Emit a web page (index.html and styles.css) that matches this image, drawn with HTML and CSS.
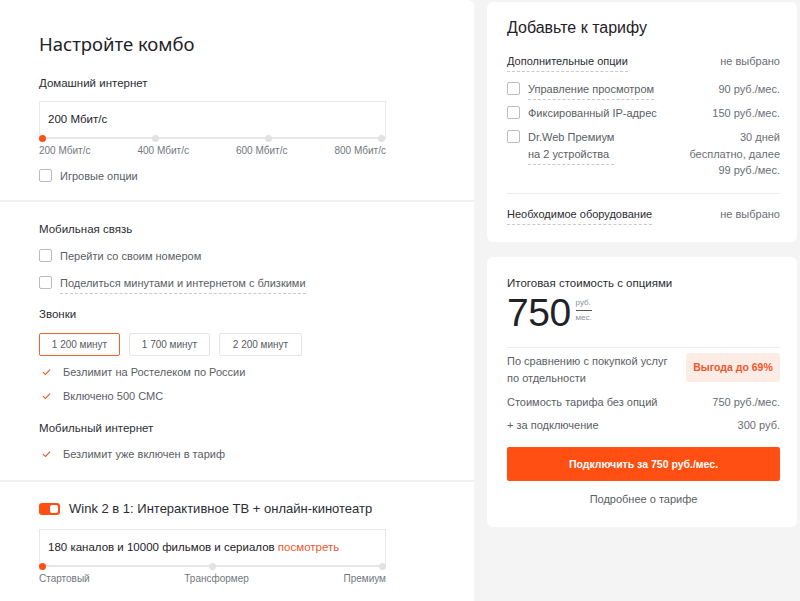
FILE: index.html
```html
<!DOCTYPE html>
<html lang="ru">
<head>
<meta charset="utf-8">
<title>Комбо</title>
<link rel="stylesheet" href="styles.css">
</head>
<body>
<div class="page">
  <main class="card left">
    <section class="sec sec-first">
      <h1 class="title">Настройте комбо</h1>
      <div class="label">Домашний интернет</div>
      <div class="slider">
        <div class="slider-box">200 Мбит/с</div>
        <div class="track four">
          <span class="dot on"></span><span class="dot"></span><span class="dot"></span><span class="dot"></span>
        </div>
        <div class="ticks">
          <span>200 Мбит/с</span><span>400 Мбит/с</span><span>600 Мбит/с</span><span>800 Мбит/с</span>
        </div>
      </div>
      <label class="check"><span class="box"></span><span>Игровые опции</span></label>
    </section>
    <section class="sec sec-mobile">
      <div class="label">Мобильная связь</div>
      <label class="check"><span class="box"></span><span>Перейти со своим номером</span></label>
      <label class="check"><span class="box"></span><span class="dotted">Поделиться минутами и интернетом с близкими</span></label>
      <div class="label sub">Звонки</div>
      <div class="pills">
        <span class="pill active">1 200 минут</span>
        <span class="pill">1 700 минут</span>
        <span class="pill">2 200 минут</span>
      </div>
      <ul class="ticklist">
        <li><svg class="tick" viewBox="0 0 10 8"><path d="M1 4.2 L3.8 6.6 L9 1.4" fill="none" stroke="#f05a28" stroke-width="1.3"/></svg>Безлимит на Ростелеком по России</li>
        <li><svg class="tick" viewBox="0 0 10 8"><path d="M1 4.2 L3.8 6.6 L9 1.4" fill="none" stroke="#f05a28" stroke-width="1.3"/></svg>Включено 500 СМС</li>
      </ul>
      <div class="label sub2">Мобильный интернет</div>
      <ul class="ticklist last">
        <li><svg class="tick" viewBox="0 0 10 8"><path d="M1 4.2 L3.8 6.6 L9 1.4" fill="none" stroke="#f05a28" stroke-width="1.3"/></svg>Безлимит уже включен в тариф</li>
      </ul>
    </section>
    <section class="sec sec-tv">
      <div class="toggle-row"><span class="toggle"><span class="knob"></span></span><span class="toggle-text">Wink 2 в 1: Интерактивное ТВ + онлайн-кинотеатр</span></div>
      <div class="slider">
        <div class="slider-box">180 каналов и 10000 фильмов и сериалов <a class="link">посмотреть</a></div>
        <div class="track three">
          <span class="dot on"></span><span class="dot"></span><span class="dot"></span>
        </div>
        <div class="ticks">
          <span>Стартовый</span><span>Трансформер</span><span>Премиум</span>
        </div>
      </div>
    </section>
  </main>
  <aside class="right">
    <div class="card addon">
      <h2 class="title2">Добавьте к тарифу</h2>
      <div class="row head"><span class="dotted">Дополнительные опции</span><span class="val">не выбрано</span></div>
      <div class="row opt first"><label class="check"><span class="box"></span><span class="dotted">Управление просмотром</span></label><span class="val">90 руб./мес.</span></div>
      <div class="row opt"><label class="check"><span class="box"></span><span>Фиксированный IP-адрес</span></label><span class="val">150 руб./мес.</span></div>
      <div class="row opt multi"><label class="check"><span class="box"></span><span class="dotted">Dr.Web Премиум<br>на 2 устройства</span></label><span class="val">30 дней<br>бесплатно, далее<br>99 руб./мес.</span></div>
      <div class="row head equip"><span class="dotted">Необходимое оборудование</span><span class="val">не выбрано</span></div>
    </div>
    <div class="card total">
      <div class="total-title">Итоговая стоимость с опциями</div>
      <div class="price"><span class="big">750</span><span class="frac"><span class="num">руб.</span><span class="den">мес.</span></span></div>
      <div class="cmp">
        <span class="cmp-text">По сравнению с покупкой услуг<br>по отдельности</span>
        <span class="badge">Выгода до 69%</span>
      </div>
      <div class="row line"><span>Стоимость тарифа без опций</span><span class="val">750 руб./мес.</span></div>
      <div class="row line"><span>+ за подключение</span><span class="val">300 руб.</span></div>
      <button class="btn">Подключить за 750 руб./мес.</button>
      <div class="more">Подробнее о тарифе</div>
    </div>
  </aside>
</div>
</body>
</html>
```

FILE: styles.css
```css
* { box-sizing: border-box; }
html, body { margin: 0; padding: 0; }
body {
  background: #f4f4f4;
  font-family: "Liberation Sans", Arial, sans-serif;
  color: #5a5e65;
  font-size: 11px;
  width: 800px;
  height: 601px;
  overflow: hidden;
}
.page {
  display: grid;
  grid-template-columns: 474px 310px;
  column-gap: 13px;
  align-items: start;
}
.card {
  background: #fff;
  border-radius: 6px;
}
.left {
  border-radius: 0 6px 0 0;
  min-height: 601px;
}
.sec {
  padding: 0 39px;
  border-bottom: 2px solid #f1f1f1;
}
.sec-first { padding-top: 31px; padding-bottom: 16px; }
.title {
  margin: 0;
  font-family: "Noto Sans", "Liberation Sans", sans-serif;
  font-size: 18.5px;
  font-weight: 400;
  color: #1f2228;
  line-height: 26px;
}
.label {
  color: #2a2d33;
  font-size: 11.5px;
  line-height: 16px;
  margin-top: 18px;
}
.slider { margin-top: 10px; width: 347px; }
.slider-box {
  border: 1px solid #e8e8e8;
  border-bottom: none;
  height: 36px;
  padding: 11px 8px 0;
  color: #1f2228;
  font-size: 11.5px;
}
.link { color: #f0552a; }
.track {
  height: 2px;
  background: #e6e6e6;
  display: flex;
  justify-content: space-between;
  align-items: center;
}
.track.four { padding: 0 1px 0 0; }
.dot {
  width: 7px; height: 7px;
  border-radius: 50%;
  background: #e2e2e2;
}
.dot.on { background: #ff4f12; }
.ticks {
  display: flex;
  justify-content: space-between;
  margin-top: 5px;
  font-size: 10px;
  color: #73777e;
  line-height: 14px;
}
.check {
  display: flex;
  align-items: flex-start;
  gap: 8px;
  line-height: 16px;
}
.box {
  width: 13px; height: 13px;
  border: 1px solid #b9bcc0;
  border-radius: 2px;
  flex: none;
  margin-top: 1px;
}
.sec-first .check { margin-top: 10px; }
.dotted {
  border-bottom: 1px dashed #c8cacd;
  padding-bottom: 2px;
}
.sec-mobile { padding-top: 19px; padding-bottom: 18px; }
.sec-mobile .label:first-child { margin-top: 0; }
.sec-mobile .check { margin-top: 11px; }
.label.sub { margin-top: 12px; }
.label.sub2 { margin-top: 16px; }
.pills { display: flex; gap: 9px; margin-top: 11px; }
.pill {
  width: 81px;
  height: 23px;
  border: 1px solid #e5e5e5;
  border-radius: 2px;
  display: flex; align-items: center; justify-content: center;
  font-size: 10px;
  color: #575b63;
}
.pill.active { border-color: #ee6433; }
.pill:last-child { width: 83px; }
.ticklist { list-style: none; margin: 0; padding: 0; }
.ticklist li {
  display: flex; align-items: center;
  margin-top: 8px;
  line-height: 16px;
}
.ticklist.last li { margin-top: 10px; }
.tick { width: 9px; height: 8px; margin: 0 12px 0 3px; }
.sec-tv { border-bottom: none; padding-top: 19px; }
.toggle-row { display: flex; align-items: center; gap: 9px; }
.toggle {
  width: 21px; height: 12px;
  border-radius: 3px;
  background: #ff4f12;
  position: relative;
}
.knob {
  position: absolute;
  right: 2px; top: 2px;
  width: 8px; height: 8px;
  border-radius: 2px;
  background: #fff;
}
.toggle-text { font-size: 13px; color: #2a2d33; }
.sec-tv .slider { margin-top: 13px; }

.right { display: flex; flex-direction: column; gap: 15px; padding-top: 2px; }
.addon { padding: 15px 17px 17px 20px; }
.title2 {
  margin: 0;
  font-size: 16px;
  font-weight: 400;
  color: #1f2228;
  line-height: 22px;
}
.row { display: flex; justify-content: space-between; align-items: flex-start; }
.val { text-align: right; color: #6a6e75; }
.row.head { margin-top: 14px; color: #2a2d33; line-height: 16px; }
.row.opt { margin-top: 5px; }
.row.opt.first { margin-top: 9px; }
.row.opt.multi { margin-top: 8px; }
.row.opt .val { line-height: 16px; }
.row.opt.multi .val, .row.opt.multi .check { line-height: 16.5px; }
.row.equip { border-top: 1px solid #ececec; margin-top: 14px; padding-top: 12px; }
.total { padding: 18px 17px 20px 20px; }
.total-title { color: #2a2d33; font-size: 11.5px; line-height: 16px; }
.price { display: flex; align-items: flex-start; gap: 5px; margin-top: 2px; padding-bottom: 14px; border-bottom: 1px solid #ececec; }
.big { font-size: 39px; line-height: 40px; color: #1f2228; letter-spacing: -0.5px; }
.frac { display: flex; flex-direction: column; font-size: 8px; color: #8a8e94; margin-top: 5px; }
.num { border-bottom: 1px solid #555; padding-bottom: 2px; line-height: 10px; }
.den { line-height: 10px; padding-top: 2px; }
.cmp { display: flex; justify-content: space-between; align-items: flex-start; margin-top: 1px; }
.cmp-text { line-height: 17px; padding-top: 4px; }
.badge {
  background: #fdece6;
  color: #f0552a;
  font-weight: 700;
  font-size: 10.5px;
  width: 94px;
  height: 29px;
  border-radius: 3px;
  display: flex; align-items: center; justify-content: center;
  margin-top: 4px;
}
.row.line { margin-top: 7px; line-height: 16px; }
.btn {
  display: block;
  width: 100%;
  margin-top: 14px;
  height: 34px;
  border: none;
  border-radius: 2px;
  background: #ff4f12;
  color: #fff;
  font-family: inherit;
  font-weight: 700;
  font-size: 10.5px;
}
.more { text-align: center; margin-top: 10px; line-height: 16px; }
```
